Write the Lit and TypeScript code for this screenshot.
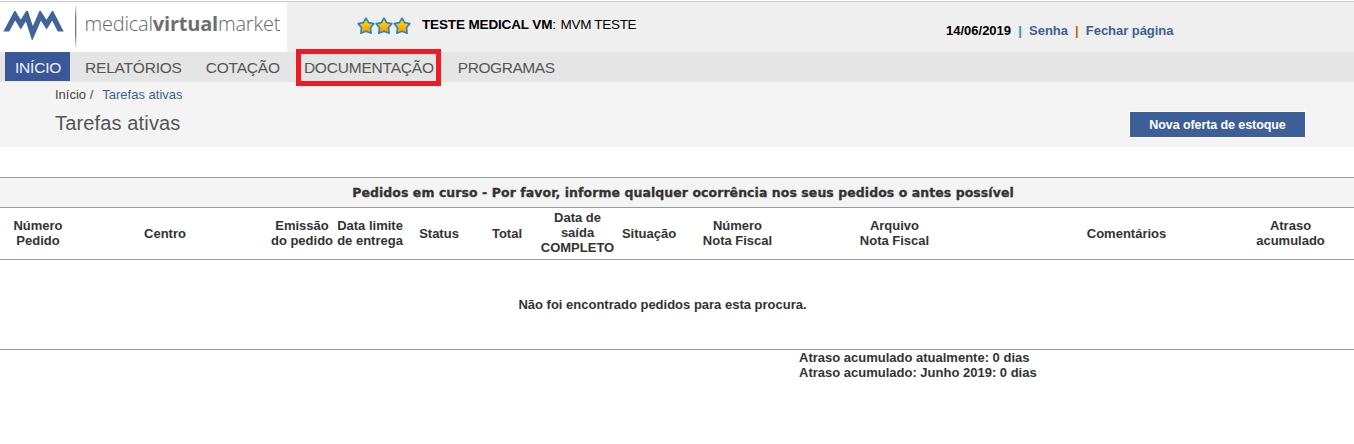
import { LitElement, html, css } from "lit";
import { customElement } from "lit/decorators.js";

const NAV = ["INÍCIO", "RELATÓRIOS", "COTAÇÃO", "DOCUMENTAÇÃO", "PROGRAMAS"];

const COLUMNS: string[][] = [
  ["Número", "Pedido"],
  ["Centro"],
  ["Emissão", "do pedido"],
  ["Data limite", "de entrega"],
  ["Status"],
  ["Total"],
  ["Data de", "saída", "COMPLETO"],
  ["Situação"],
  ["Número", "Nota Fiscal"],
  ["Arquivo", "Nota Fiscal"],
  ["Comentários"],
  ["Atraso", "acumulado"],
];

@customElement("mvm-logo")
class MvmLogo extends LitElement {
  static styles = css`
    :host { display: flex; width: 287px; height: 50px; background: #fff; }
    .mark { display: block; flex: none; }
    .name {
      font: 300 20px/24px "Open Sans", sans-serif;
      color: #666;
      margin: 10px 0 0 0.5px;
      white-space: nowrap;
      letter-spacing: -0.2px;
    }
    .strong { font-weight: 700; color: #6e6e6e; }
  `;
  render() {
    return html`
      <svg class="mark" width="84" height="50" viewBox="0 2 84 50">
        <defs>
          <linearGradient id="rule" x1="0" y1="0" x2="0" y2="1">
            <stop offset="0" stop-color="#ddd" />
            <stop offset=".3" stop-color="#777" />
            <stop offset=".7" stop-color="#777" />
            <stop offset="1" stop-color="#ddd" />
          </linearGradient>
          <clipPath id="cut"><path d="M0 11 H66 V31.5 H40 V40 H25 V31.5 H0 Z" /></clipPath>
        </defs>
        <path clip-path="url(#cut)" fill="none" stroke="#40649b" stroke-width="5.2" stroke-linejoin="miter"
          d="M4.5 35 L15 15.2 L20.8 24.6 L26.6 15.2 L32.5 33.5 L40.4 15.2 L46.6 24.6 L52.4 15.2 L62.5 35" />
        <rect x="75" y="6" width="1.3" height="41" fill="url(#rule)" />
      </svg>
      <span class="name">medical<span class="strong">virtual</span>market</span>
    `;
  }
}

@customElement("star-rating")
class StarRating extends LitElement {
  static styles = css`
    :host { display: flex; }
    .star { display: block; }
  `;
  render() {
    return html`${[0, 1, 2].map(
      () => html`<svg class="star" width="18" height="18" viewBox="0 0 18 18">
        <defs>
          <linearGradient id="gold" x1="0" y1="0" x2="0" y2="1">
            <stop offset="0" stop-color="#ffe100" />
            <stop offset="1" stop-color="#ff9500" />
          </linearGradient>
        </defs>
        <path fill="url(#gold)" stroke="#2e86bf" stroke-width="1.7" stroke-linejoin="round"
          d="M9 1.2 L11.7 5.6 L16.8 6.6 L13.5 10.7 L14.1 16.2 L9 14.2 L3.9 16.2 L4.5 10.7 L1.2 6.6 L6.3 5.6 Z" />
      </svg>`
    )}`;
  }
}

@customElement("app-root")
class AppRoot extends LitElement {
  static styles = css`
    :host {
      display: block;
      height: 444px;
      overflow: hidden;
      background: #fff;
      color: #333;
      font: 13px/15px "Liberation Sans", Arial, sans-serif;
      white-space: nowrap;
    }
    .top {
      display: flex;
      height: 50px;
      border-top: 1px solid #c9c9c9;
      margin-top: 1px;
      background: #efefef;
      color: #000;
    }
    .stars { margin: 15px 0 0 70px; }
    .company { margin: 15px 0 0 11px; font-size: 13.5px; letter-spacing: -0.14px; width: 524px; }
    .user { margin-left: 1px; letter-spacing: -0.3px; }
    .session { display: flex; margin-top: 21px; font-weight: bold; }
    .bar { width: 18px; text-align: center; color: #4887b8; }
    .bar.warm { color: #b5700e; }
    .link { color: #3d5e96; }
    .session .link { letter-spacing: -0.05px; }
    .nav { display: flex; height: 30px; background: #e5e5e5; padding-left: 5px; }
    .tab {
      height: 29px;
      padding: 0 10px;
      margin-right: 4px;
      font-size: 15.5px;
      letter-spacing: -0.2px;
      line-height: 31px;
      color: #555;
    }
    .tab.active { background: #3a579a; color: #f3f3f3; width: 45px; margin-right: 5px; }
    .tab:last-child { letter-spacing: -0.45px; }
    .tab.marked { position: relative; }
    .frame {
      position: absolute;
      left: 2px;
      top: -3px;
      width: 135px;
      height: 27px;
      border: 5px solid #ed1c24;
    }
    .title-area {
      display: flex;
      justify-content: space-between;
      height: 65px;
      padding: 0 49px 0 55px;
      background: #f4f4f4;
    }
    .crumbs { display: flex; gap: 9px; margin-top: 5px; font-size: 13px; color: #444; }
    .title { margin: 10px 0 0; font-size: 20px; line-height: 23px; font-weight: normal; color: #555; letter-spacing: 0.15px; }
    .action {
      width: 175px;
      height: 25px;
      margin-top: 30px;
      outline: 1px solid #fff;
      background: #3d5e96;
      color: #fff;
      text-align: center;
      font-weight: bold;
      line-height: 26px;
      font-size: 12.5px;
      letter-spacing: -0.08px;
    }
    .orders { margin-top: 30px; font-weight: bold; }
    .banner {
      height: 29px;
      border: solid #999;
      border-width: 1px 0;
      background: #f4f4f4;
      text-align: center;
      font: bold 12.5px/29px "DejaVu Sans", sans-serif;
      letter-spacing: 0.06px;
      -webkit-text-stroke: 0.3px #333;
      padding-left: 12px;
    }
    .heads {
      display: grid;
      grid-template-columns: 48px 206px 68px 68px 70px 66px 75px 68px 109px 205px 259px 69px;
      justify-items: center;
      align-items: center;
      height: 51px;
      padding-left: 14px;
      border-bottom: 1px solid #999;
    }
    .head { text-align: center; }
    .head.multi { margin-bottom: 2px; }
    .line { display: block; }
    .empty {
      height: 89px;
      line-height: 89px;
      border-bottom: 1px solid #999;
      text-align: center;
      padding-right: 29px;
    }
    .totals { padding-left: 799px; }
  `;
  render() {
    return html`
      <header class="top">
        <mvm-logo></mvm-logo>
        <star-rating class="stars"></star-rating>
        <div class="company"><b>TESTE MEDICAL VM</b>: <span class="user">MVM TESTE</span></div>
        <div class="session">
          <span>14/06/2019</span><span class="bar">|</span><span class="link">Senha</span
          ><span class="bar warm">|</span><span class="link">Fechar página</span>
        </div>
      </header>
      <nav class="nav">
        ${NAV.map(
          (label, i) => html`<div class="tab ${i === 0 ? "active" : ""} ${i === 3 ? "marked" : ""}">
            ${label}${i === 3 ? html`<span class="frame"></span>` : ""}
          </div>`
        )}
      </nav>
      <section class="title-area">
        <div>
          <div class="crumbs"><span>Início /</span><span class="link">Tarefas ativas</span></div>
          <h1 class="title">Tarefas ativas</h1>
        </div>
        <div class="action">Nova oferta de estoque</div>
      </section>
      <section class="orders">
        <div class="banner">Pedidos em curso - Por favor, informe qualquer ocorrência nos seus pedidos o antes possível</div>
        <div class="heads">
          ${COLUMNS.map(
            (lines) => html`<div class="head ${lines.length > 1 ? "multi" : ""}">${lines.map((l) => html`<span class="line">${l}</span>`)}</div>`
          )}
        </div>
        <div class="empty">Não foi encontrado pedidos para esta procura.</div>
        <div class="totals">
          <div>Atraso acumulado atualmente: 0 dias</div>
          <div>Atraso acumulado: Junho 2019: 0 dias</div>
        </div>
      </section>
    `;
  }
}
